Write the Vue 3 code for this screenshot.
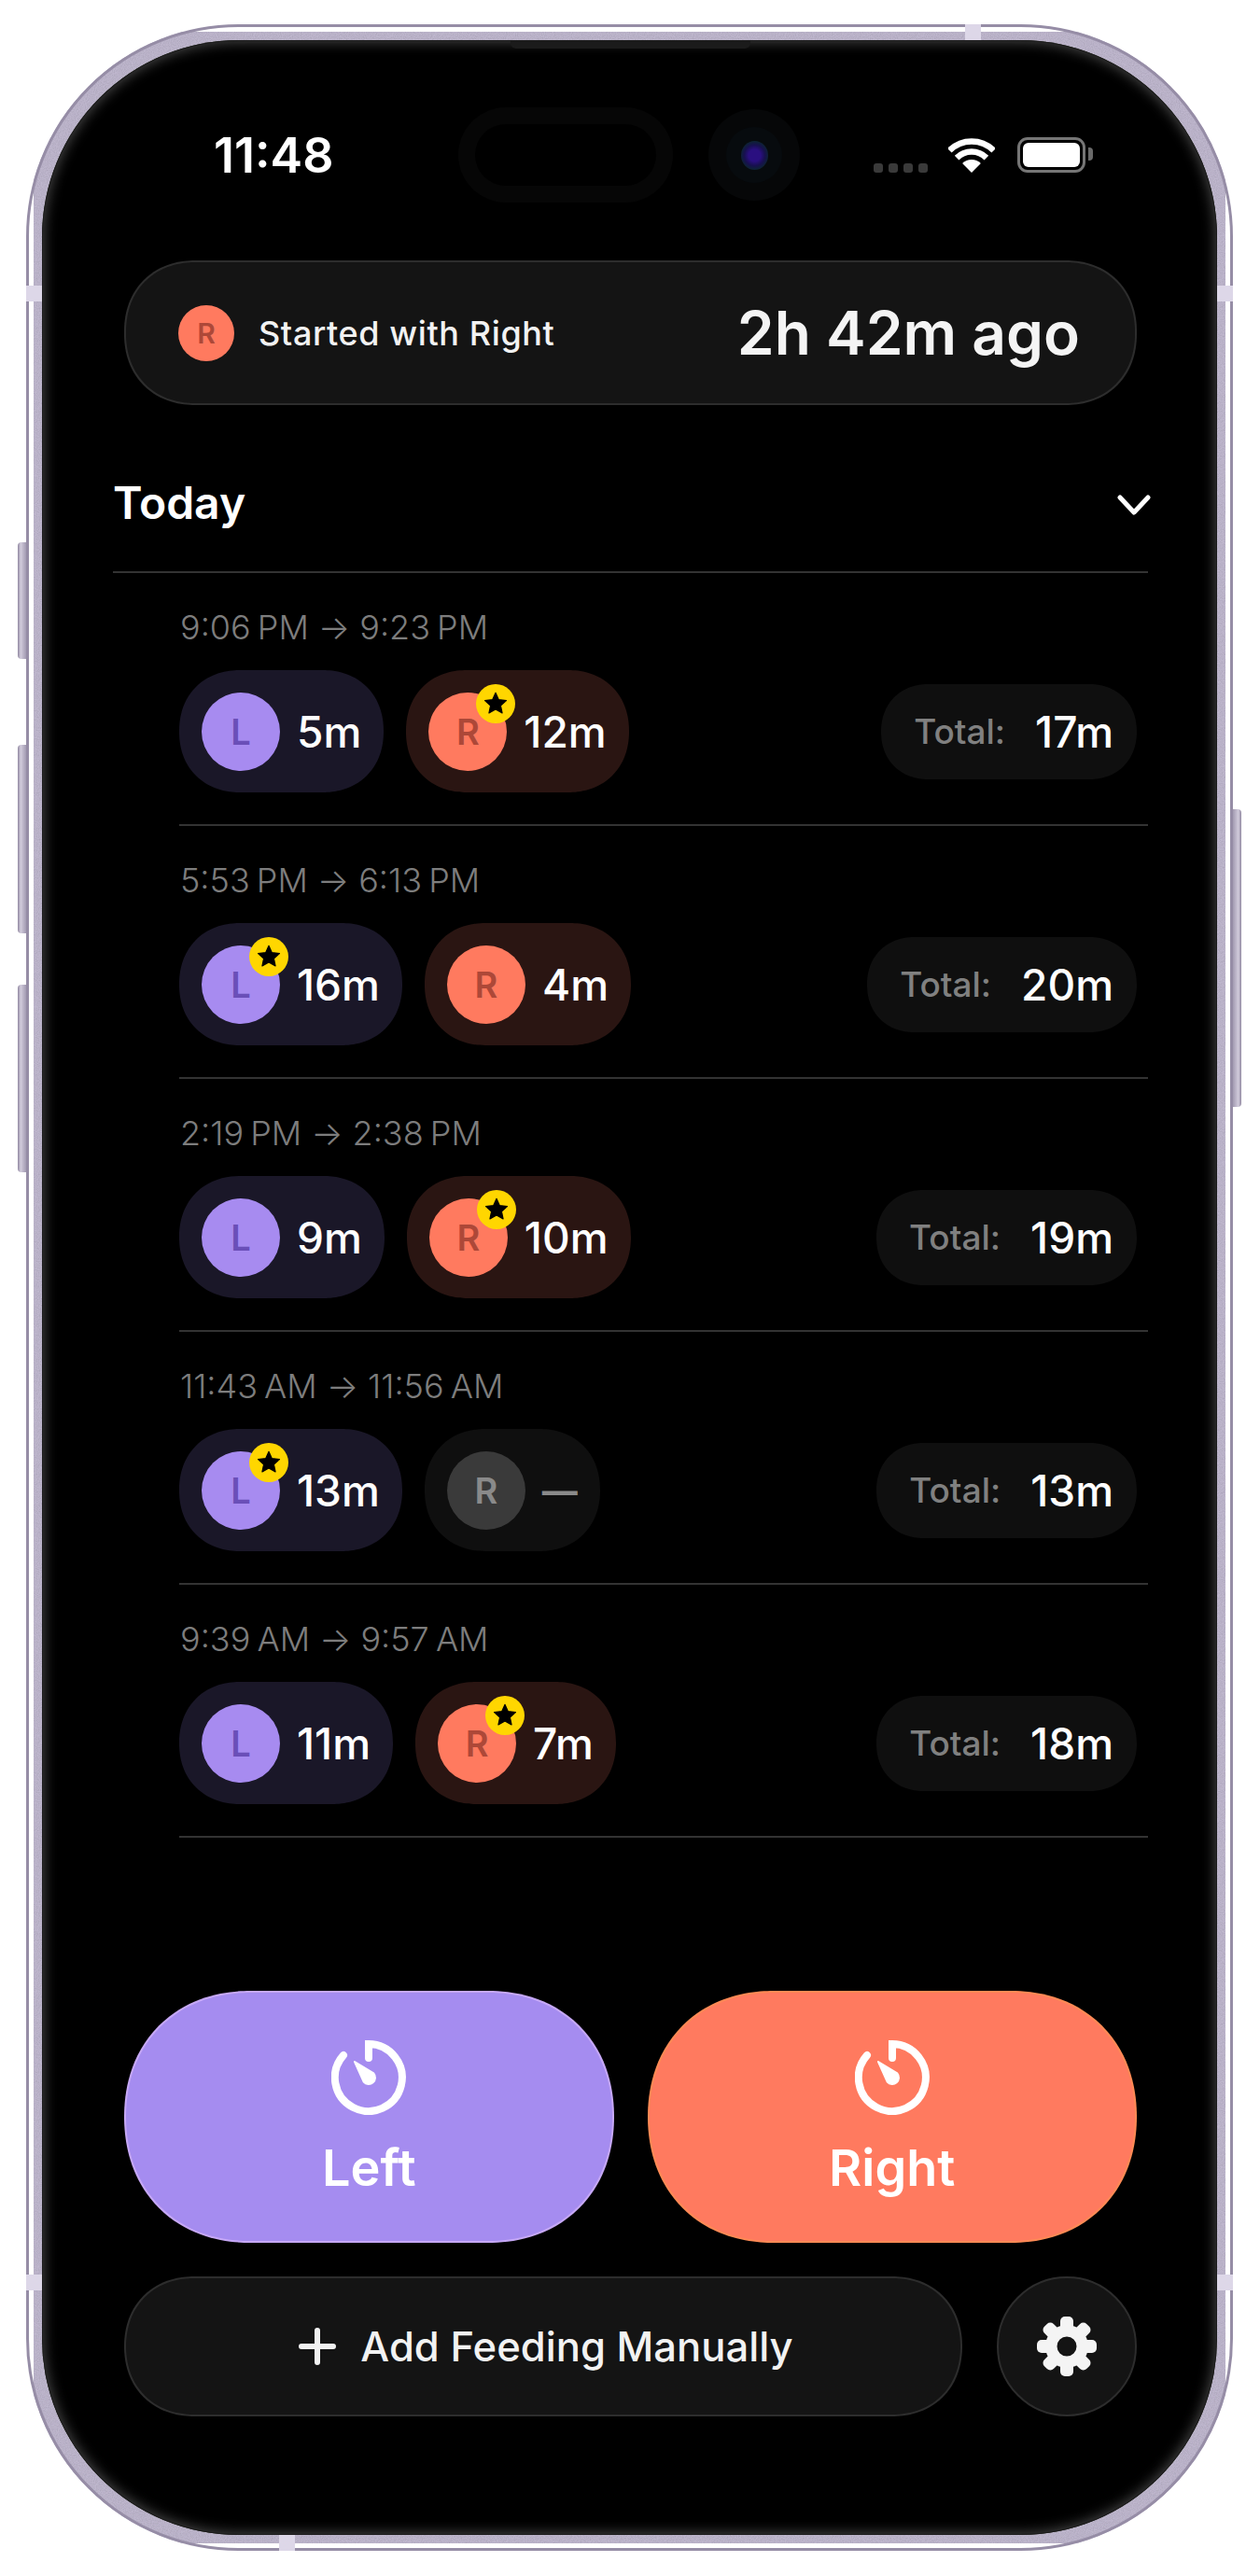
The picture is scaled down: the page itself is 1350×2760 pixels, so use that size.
<template>
  <div class="phone">
    <svg class="rim" width="1293" height="2707">
      <defs>
        <filter id="grain" x="0" y="0" width="100%" height="100%">
          <feTurbulence type="fractalNoise" baseFrequency="0.9" numOctaves="2" seed="4" result="n" />
          <feColorMatrix in="n" type="matrix" values="0 0 0 0 0.35  0 0 0 0 0.32  0 0 0 0 0.42  0 0 0 1.1 -0.35" result="speck" />
          <feComposite in="speck" in2="SourceAlpha" operator="in" result="clipped" />
          <feMerge>
            <feMergeNode in="SourceGraphic" />
            <feMergeNode in="clipped" />
          </feMerge>
        </filter>
      </defs>
      <rect x="8.5" y="8.5" width="1276" height="2690" rx="219" fill="none" stroke="#bfb7ce" stroke-width="17" filter="url(#grain)" />
      <rect x="1.500" y="1.500" width="1290" height="2704" rx="226" fill="none" stroke="#968da6" stroke-width="3" />
    </svg>
    <span class="side-btn s1"></span>
    <span class="side-btn s2"></span>
    <span class="side-btn s3"></span>
    <span class="side-btn s4"></span>
    <span class="band b-top"></span>
    <span class="band b-left1"></span>
    <span class="band b-right1"></span>
    <span class="band b-left2"></span>
    <span class="band b-right2"></span>
    <span class="band b-bottom"></span>

    <div class="screen">
      <span class="speaker"></span>
      <div class="island"><span class="island-inner"></span></div>
      <div class="camera"><span class="camera-mid"><span class="lens"></span></span></div>

      <div class="status">
        <span class="clock">11:48</span>
        <div class="status-icons">
          <div class="signal"><i></i><i></i><i></i><i></i></div>
          <svg class="wifi" width="50" height="37" viewBox="0 0 50 37">
            <path d="M1.3 13.3A33.5 33.5 0 0 1 48.7 13.3" fill="none" stroke="#fff" stroke-width="6.5" />
            <path d="M9.1 21.1A22.5 22.5 0 0 1 40.9 21.1" fill="none" stroke="#fff" stroke-width="6.5" />
            <path d="M25 37L15.1 27.1A14 14 0 0 1 34.9 27.1Z" fill="#fff" />
          </svg>
          <div class="battery"><span class="battery-fill"></span><span class="battery-nub"></span></div>
        </div>
      </div>

      <div class="main">
        <div class="banner">
          <span class="dot-r">R</span>
          <span class="banner-label">Started with Right</span>
          <span class="banner-time">2h 42m ago</span>
        </div>

        <div class="section-head">
          <span>Today</span>
          <svg class="chevron" width="36" height="24" viewBox="0 0 36 24">
            <path d="M3 4L18 20L33 4" fill="none" stroke="#fff" stroke-width="5" stroke-linecap="round" stroke-linejoin="round" />
          </svg>
        </div>

        <div v-for="row in feedings" :key="row.from" class="row">
          <div class="range">
            <span>{{ row.from }}</span>
            <span class="arrow">→</span>
            <span>{{ row.to }}</span>
          </div>
          <div class="row-body">
            <div v-for="s in row.sides" :key="s.side" class="pill" :class="s.time ? s.side : 'empty'">
              <span class="avatar">
                {{ s.side.toUpperCase() }}
                <span v-if="s.first" class="badge">
                  <svg width="28" height="27" viewBox="0 0 24 24">
                    <path d="M12 2l3 6.6 7.2.8-5.4 4.8 1.5 7.1L12 17.7 5.7 21.3l1.5-7.1L1.8 9.4 9 8.6z" fill="#000" stroke="#000" stroke-width="1" stroke-linejoin="round" />
                  </svg>
                </span>
              </span>
              <span v-if="s.time" class="amount">{{ s.time }}</span>
              <span v-else class="dash">—</span>
            </div>
            <div class="total">
              <span class="total-label">Total:</span>
              <span class="amount">{{ row.total }}</span>
            </div>
          </div>
        </div>

        <div class="footer">
          <div class="timers">
            <button v-for="t in timers" :key="t.name" class="timer" :class="t.cls">
              <svg width="80" height="80" viewBox="0 0 80 80">
                <path d="M40 19V4A36 36 0 1 1 13 16" fill="none" stroke="#fff" stroke-width="8" stroke-linecap="round" />
                <path d="M25 23L45.3 35.4A7 7 0 1 1 34.7 44.6Z" fill="#fff" stroke="#fff" stroke-width="2" stroke-linejoin="round" />
              </svg>
              <span>{{ t.name }}</span>
            </button>
          </div>
          <div class="actions">
            <button class="add">
              <svg width="40" height="40" viewBox="0 0 40 40">
                <path d="M20 3V37M3 20H37" fill="none" stroke="#f2f2f2" stroke-width="6" stroke-linecap="round" />
              </svg>
              <span>Add Feeding Manually</span>
            </button>
            <button class="settings">
              <svg width="64" height="64" viewBox="0 0 64 64">
                <g fill="#f4f4f4">
                  <rect v-for="a in gearTeeth" :key="a" x="25" y="0" width="14" height="18" rx="5" :transform="`rotate(${a} 32 32)`" />
                  <path fill-rule="evenodd" d="M32 9a23 23 0 1 0 0 46a23 23 0 1 0 0-46zM32 21.500a10.500 10.500 0 1 1 0 21a10.500 10.500 0 1 1 0-21z" />
                </g>
              </svg>
            </button>
          </div>
        </div>
      </div>
    </div>
  </div>
</template>

<script setup>
const feedings = [
  {
    from: '9:06 PM',
    to: '9:23 PM',
    total: '17m',
    sides: [
      { side: 'l', time: '5m' },
      { side: 'r', time: '12m', first: true },
    ],
  },
  {
    from: '5:53 PM',
    to: '6:13 PM',
    total: '20m',
    sides: [
      { side: 'l', time: '16m', first: true },
      { side: 'r', time: '4m' },
    ],
  },
  {
    from: '2:19 PM',
    to: '2:38 PM',
    total: '19m',
    sides: [
      { side: 'l', time: '9m' },
      { side: 'r', time: '10m', first: true },
    ],
  },
  {
    from: '11:43 AM',
    to: '11:56 AM',
    total: '13m',
    sides: [
      { side: 'l', time: '13m', first: true },
      { side: 'r', time: '' },
    ],
  },
  {
    from: '9:39 AM',
    to: '9:57 AM',
    total: '18m',
    sides: [
      { side: 'l', time: '11m' },
      { side: 'r', time: '7m', first: true },
    ],
  },
]

const timers = [
  { name: 'Left', cls: 'left' },
  { name: 'Right', cls: 'right' },
]

const gearTeeth = [0, 45, 90, 135, 180, 225, 270, 315]
</script>

<style>
html,
body {
  background: #fff;
}
</style>

<style scoped>
.phone {
  position: relative;
  box-sizing: border-box;
  width: 1293px;
  height: 2707px;
  margin: 26px 0 0 28px;
  padding: 17px;
  font-family: Inter, "Noto Sans", sans-serif;
  color: #fff;
}

.rim {
  position: absolute;
  left: 0;
  top: 0;
}

.side-btn {
  position: absolute;
  width: 9px;
  left: -9px;
  border-radius: 4px 0 0 4px;
  background: linear-gradient(90deg, #8f869f, #d2ccdc 35%, #a39bb2);
}

.s1 { top: 555px; height: 125px; }
.s2 { top: 772px; height: 202px; }
.s3 { top: 1029px; height: 201px; }
.s4 {
  top: 841px;
  height: 319px;
  left: auto;
  right: -9px;
  border-radius: 0 4px 4px 0;
  background: linear-gradient(270deg, #8f869f, #d2ccdc 35%, #a39bb2);
}

.band {
  position: absolute;
  background: #ddd7e8;
}

.b-top { left: 1006px; top: 0; width: 17px; height: 17px; }
.b-left1 { left: 0; top: 280px; width: 17px; height: 17px; }
.b-right1 { right: 0; top: 280px; width: 17px; height: 17px; }
.b-left2 { left: 0; top: 2411px; width: 17px; height: 17px; }
.b-right2 { right: 0; top: 2411px; width: 17px; height: 17px; }
.b-bottom { left: 271px; bottom: 0; width: 17px; height: 17px; }

.screen {
  position: relative;
  display: flex;
  flex-direction: column;
  box-sizing: border-box;
  height: 100%;
  border-radius: 211px;
  background: #000;
  box-shadow: inset 0 0 0 1px #1c1c1c, inset 0 0 14px 2px #484848;
}

.speaker {
  position: absolute;
  left: 502px;
  top: 0;
  width: 257px;
  height: 9px;
  border-radius: 0 0 6px 6px;
  background: #1b1b1b;
}

.island {
  position: absolute;
  left: 446px;
  top: 72px;
  display: flex;
  align-items: center;
  justify-content: center;
  width: 230px;
  height: 102px;
  border-radius: 51px;
  background: #060606;
}

.island-inner {
  width: 194px;
  height: 66px;
  border-radius: 33px;
  background: #000;
}

.camera {
  position: absolute;
  left: 714px;
  top: 74px;
  display: flex;
  align-items: center;
  justify-content: center;
  width: 98px;
  height: 98px;
  border-radius: 50%;
  background: #060708;
}

.camera-mid {
  display: flex;
  align-items: center;
  justify-content: center;
  width: 60px;
  height: 60px;
  border-radius: 50%;
  background: #070b0e;
}

.lens {
  width: 29px;
  height: 31px;
  border-radius: 50%;
  background: radial-gradient(circle, #2a0f80 0 30%, #17104f 52%, #0c2630 75%, #0a1418);
}

.status {
  display: flex;
  align-items: flex-start;
  justify-content: space-between;
  box-sizing: border-box;
  height: 236px;
  padding: 99px 141px 0 184px;
}

.clock {
  font-size: 52px;
  line-height: 50px;
  font-weight: 600;
}

.status-icons {
  display: flex;
  align-items: flex-end;
  height: 43px;
}

.signal {
  display: flex;
  gap: 6px;
  margin-right: 22px;
}

.signal i {
  width: 10px;
  height: 10px;
  border-radius: 3px;
  background: #3a3a3a;
}

.wifi {
  display: block;
  margin-right: 24px;
}

.battery {
  position: relative;
  box-sizing: border-box;
  width: 73px;
  height: 38px;
  padding: 3px;
  border: 3px solid #767676;
  border-radius: 11px;
}

.battery-fill {
  display: block;
  height: 100%;
  border-radius: 6px;
  background: #fff;
}

.battery-nub {
  position: absolute;
  right: -11px;
  top: 8px;
  width: 5px;
  height: 14px;
  border-radius: 0 4px 4px 0;
  background: #6a6a6a;
}

.main {
  flex: 1;
  display: flex;
  flex-direction: column;
  padding: 0 86px 127px 88px;
}

.banner {
  display: flex;
  align-items: center;
  box-sizing: border-box;
  height: 155px;
  padding: 0 59px 0 56px;
  border: 2px solid #2d2d2d;
  border-radius: 76px;
  corner-shape: superellipse(1.1);
  background: #141414;
}

.dot-r {
  display: flex;
  align-items: center;
  justify-content: center;
  width: 60px;
  height: 60px;
  border-radius: 50%;
  background: #ff7a5f;
  color: #ad4838;
  font-size: 30px;
  font-weight: 600;
}

.banner-label {
  margin-left: 26px;
  font-size: 36px;
  letter-spacing: 0.6px;
  font-weight: 500;
  color: #f2f2f2;
}

.banner-time {
  margin-left: auto;
  font-size: 64px;
  font-weight: 600;
  color: #f4f4f4;
}

.section-head {
  display: flex;
  align-items: center;
  justify-content: space-between;
  box-sizing: border-box;
  height: 180px;
  margin: 0 -12px;
  padding: 30px 0 0 0;
  border-bottom: 2px solid #333;
  font-size: 48px;
  font-weight: 600;
}

.chevron {
  margin: 6px -3px 0 0;
}

.row {
  box-sizing: border-box;
  height: 271px;
  margin: 0 -12px 0 59px;
  padding-right: 12px;
  border-bottom: 2px solid #333;
}

.range {
  padding: 38px 0 0 1px;
  font-size: 36px;
  line-height: 40px;
  font-weight: 300;
  word-spacing: -3px;
  color: #7d7d7d;
}

.arrow {
  margin: 0 10px;
}

.row-body {
  display: flex;
  align-items: center;
  gap: 24px;
  margin-top: 26px;
}

.pill {
  display: flex;
  align-items: center;
  gap: 18px;
  box-sizing: border-box;
  height: 131px;
  padding: 0 24px;
  border-radius: 65px;
  corner-shape: superellipse(1.1);
}

.pill.l { background: #1a1728; }
.pill.r { background: #2a1512; }
.pill.empty { background: #0f0f0f; }

.avatar {
  position: relative;
  display: flex;
  align-items: center;
  justify-content: center;
  width: 84px;
  height: 84px;
  border-radius: 50%;
  font-size: 38px;
  font-weight: 600;
}

.l .avatar { background: #a78bf0; color: #6a4fb8; }
.r .avatar { background: #ff7a5f; color: #ad4838; }
.empty .avatar { background: #3a3a3a; color: #8a8a8a; }

.badge {
  position: absolute;
  top: -9px;
  right: -9px;
  display: flex;
  align-items: center;
  justify-content: center;
  width: 42px;
  height: 42px;
  border-radius: 50%;
  background: #ffd600;
}

.amount {
  font-size: 46px;
  font-weight: 500;
}

.dash {
  font-size: 38px;
  font-weight: 700;
  color: #8a8a8a;
}

.total {
  display: flex;
  align-items: center;
  gap: 32px;
  box-sizing: border-box;
  height: 102px;
  margin-left: auto;
  padding: 0 25px 0 35px;
  border-radius: 51px;
  corner-shape: superellipse(1.1);
  background: #0f0f0f;
}

.total-label {
  font-size: 37px;
  font-weight: 500;
  color: #808080;
}

.footer {
  margin-top: auto;
}

.timers {
  display: flex;
  gap: 36px;
}

.timer {
  flex: 1;
  display: flex;
  flex-direction: column;
  align-items: center;
  box-sizing: border-box;
  height: 270px;
  padding: 51px 0 0;
  border-radius: 135px;
  corner-shape: superellipse(1.1);
  color: #fff;
  font-family: inherit;
  font-size: 54px;
  font-weight: 600;
}

.timer span {
  margin-top: 24px;
}

.timer.left {
  border: 2px solid #c6a8f6;
  background: #a58cf0;
}

.timer.right {
  border: 2px solid #ff8a55;
  background: #ff7a5f;
}

.actions {
  display: flex;
  gap: 37px;
  margin-top: 36px;
}

.add {
  flex: 1;
  display: flex;
  align-items: center;
  justify-content: center;
  gap: 26px;
  height: 150px;
  padding: 0 0 0 6px;
  border: 2px solid #2d2d2d;
  border-radius: 75px;
  corner-shape: superellipse(1.1);
  background: #141414;
  color: #f2f2f2;
  font-family: inherit;
  font-size: 43.600px;
  font-weight: 500;
}

.settings {
  display: flex;
  align-items: center;
  justify-content: center;
  width: 150px;
  height: 150px;
  padding: 0;
  border: 2px solid #2d2d2d;
  border-radius: 50%;
  background: #141414;
}
</style>
